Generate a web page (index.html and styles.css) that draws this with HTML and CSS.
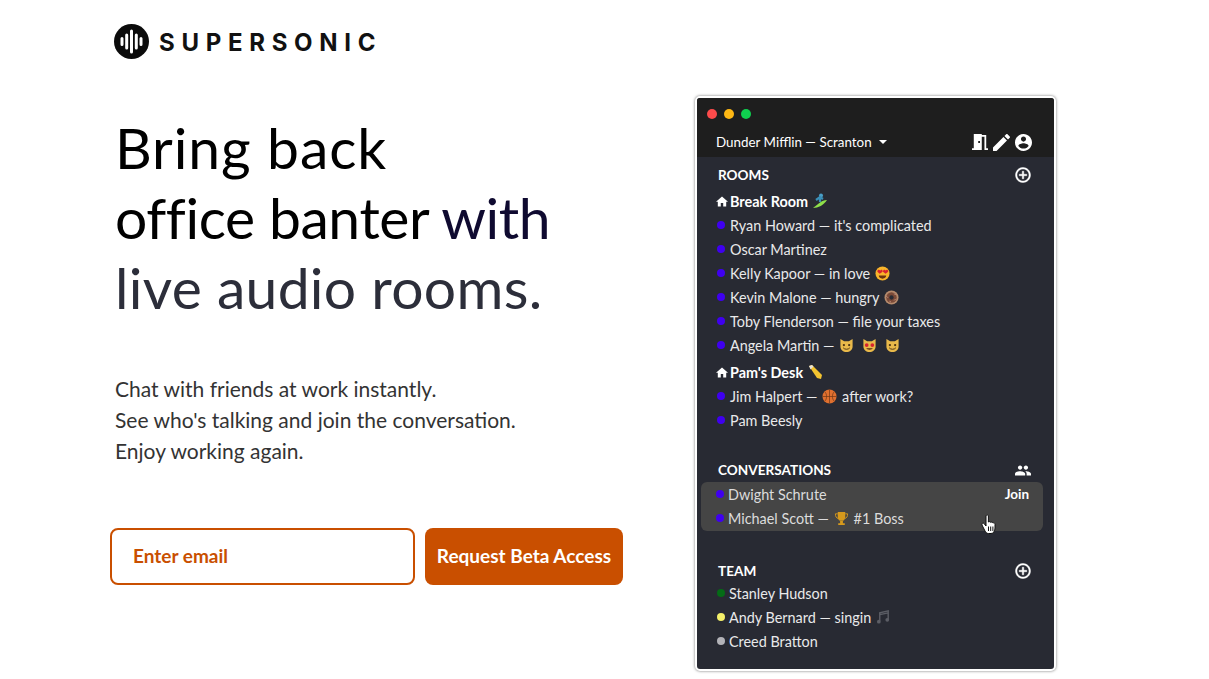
FILE: index.html
```html
<!DOCTYPE html>
<html lang="en">
<head>
  <meta charset="UTF-8" />
  <title>Supersonic</title>
  <link rel="stylesheet" href="styles.css">
</head>
<body>
  <svg class="defs" width="0" height="0">
    <defs>
      <symbol id="i-home" viewBox="2 3 20 17"><path d="M10 20v-6h4v6h5v-8h3L12 3 2 12h3v8z"/></symbol>
      <symbol id="i-add" viewBox="0 0 24 24"><path d="M13 7h-2v4H7v2h4v4h2v-4h4v-2h-4V7zm-1-5C6.48 2 2 6.48 2 12s4.48 10 10 10 10-4.48 10-10S17.52 2 12 2zm0 18c-4.41 0-8-3.59-8-8s3.59-8 8-8 8 3.59 8 8-3.59 8-8 8z"/></symbol>
      <symbol id="e-love" viewBox="0 0 16 16"><circle cx="8" cy="8" r="7.500" fill="#f9b52b"/><path d="M2.500 6c0-2.400 2.600-2.400 3-.9.4-1.500 3-1.500 2.600.9L5 8.200zM8.500 6c0-2.400 2.600-2.400 3-.9.4-1.500 2.600-1.500 2.600.9L11.300 8.200z" fill="#d9232e"/><path d="M4 10.200h8c0 2-1.800 3.300-4 3.300s-4-1.300-4-3.300z" fill="#6b3410"/></symbol>
      <symbol id="e-donut" viewBox="0 0 16 16"><circle cx="8" cy="8" r="7.500" fill="#b58a6c"/><circle cx="8" cy="8" r="5.600" fill="#7a4a38"/><circle cx="8" cy="8" r="2.300" fill="#2a2c34"/><path d="M3 7l1 1M11 4l1 1M12 10l-1 1M6 12l1 .5" stroke="#e7b9b0"/></symbol>
      <symbol id="e-cat" viewBox="0 0 16 16"><path d="M1.500 1l4 2.500h5l4-2.500v8c0 3.500-3 6-6.500 6S1.500 12.500 1.500 9z" fill="#e9b94a"/><circle cx="5.200" cy="7.500" r="1.200" fill="#4a3010"/><circle cx="10.800" cy="7.500" r="1.200" fill="#4a3010"/><path d="M4.500 10.500c1.500 2 5.500 2 7 0" stroke="#4a3010" fill="none"/></symbol>
      <symbol id="e-catlove" viewBox="0 0 16 16"><path d="M1.500 1l4 2.500h5l4-2.500v8c0 3.500-3 6-6.500 6S1.500 12.500 1.500 9z" fill="#e9b94a"/><circle cx="5" cy="7.500" r="2" fill="#d9232e"/><circle cx="11" cy="7.500" r="2" fill="#d9232e"/><path d="M4.500 11h7c-.5 2-6.500 2-7 0z" fill="#5a2a10"/></symbol>
      <symbol id="e-ball" viewBox="0 0 16 16"><circle cx="8" cy="8" r="7.500" fill="#e0702f"/><path d="M8 .5v15M.5 8h15M3 3c2.500 2.500 2.500 7.500 0 10M13 3c-2.500 2.500-2.500 7.500 0 10" stroke="#6a3416" stroke-width=".7" fill="none"/></symbol>
    </defs>
  </svg>

  <main class="page">
    <section class="hero">
      <div class="logo">
        <svg class="logo-mark" viewBox="0 0 35 35">
          <circle cx="17.500" cy="17.500" r="17.500" fill="#0b0b0b"/>
          <path d="M8 14.500v6M12.700 11v13M17.500 7v21M22.300 11v13M27 14.500v6" stroke="#fff" stroke-width="3" stroke-linecap="round"/>
        </svg>
        <span class="logo-text">SUPERSONIC</span>
      </div>

      <h1>
        <span class="line-one">Bring back</span>
        <span class="line-two">office banter <span class="navy">with</span></span>
        <span class="line-three">live audio rooms.</span>
      </h1>

      <p class="lead">Chat with friends at work instantly.<br>See who's talking and join the conversation.<br>Enjoy working again.</p>

      <form class="signup">
        <input type="text" placeholder="Enter email" />
        <button type="button">Request Beta Access</button>
      </form>
    </section>

    <section class="app">
      <div class="titlebar">
        <div class="lights">
          <span class="light red"></span>
          <span class="light yellow"></span>
          <span class="light green"></span>
        </div>
        <div class="org">
          <span class="org-name">Dunder Mifflin — Scranton</span>
          <svg class="caret" viewBox="0 0 10 5"><path d="M0 0l5 5 5-5z"/></svg>
          <div class="org-icons">
            <svg class="door" viewBox="3 3 18 18"><path d="M14 6v15H3v-2h2V3h9v1h5v15h2v2h-4V6h-3zm-4 5v2h2v-2h-2z"/></svg>
            <svg class="pencil" viewBox="3 3 18 18"><path d="M3 17.250V21h3.750L17.810 9.940l-3.750-3.750L3 17.250zM20.710 7.040c.39-.39.39-1.020 0-1.410l-2.340-2.340c-.39-.39-1.020-.39-1.410 0l-1.830 1.830 3.750 3.750 1.830-1.830z"/></svg>
            <svg class="account" viewBox="2 2 20 20"><path d="M12 2C6.480 2 2 6.480 2 12s4.480 10 10 10 10-4.480 10-10S17.520 2 12 2zm0 3c1.660 0 3 1.340 3 3s-1.340 3-3 3-3-1.340-3-3 1.340-3 3-3zm0 14.200c-2.500 0-4.710-1.280-6-3.220.03-1.990 4-3.080 6-3.080 1.990 0 5.970 1.090 6 3.080-1.290 1.940-3.500 3.220-6 3.220z"/></svg>
          </div>
        </div>
      </div>

      <div class="sidebar">
        <div class="head rooms-head">
          <span>ROOMS</span>
          <svg class="head-icon"><use href="#i-add"/></svg>
        </div>

        <div class="room">
          <svg class="home"><use href="#i-home"/></svg>Break Room
          <svg class="emoji" viewBox="0 0 16 16"><path d="M1 15c5 0 11-3 14-8-3 0-5 1-7 2.500L1 15z" fill="#8fe04a"/><circle cx="9" cy="2.500" r="2" fill="#4a9fc8"/><path d="M4 7l4-3 3 2M8 4l0 5" stroke="#3a8fb8" stroke-width="2.200" fill="none"/></svg>
        </div>
        <div class="row"><i class="dot"></i>Ryan Howard — it's complicated</div>
        <div class="row"><i class="dot"></i>Oscar Martinez</div>
        <div class="row"><i class="dot"></i>Kelly Kapoor — in love <svg class="emoji"><use href="#e-love"/></svg></div>
        <div class="row"><i class="dot"></i>Kevin Malone — hungry <svg class="emoji"><use href="#e-donut"/></svg></div>
        <div class="row"><i class="dot"></i>Toby Flenderson — file your taxes</div>
        <div class="row"><i class="dot"></i>Angela Martin — <svg class="emoji"><use href="#e-cat"/></svg><svg class="emoji spaced"><use href="#e-catlove"/></svg><svg class="emoji spaced"><use href="#e-cat"/></svg></div>

        <div class="room second">
          <svg class="home"><use href="#i-home"/></svg>Pam's Desk
          <svg class="emoji" viewBox="0 0 16 16"><path d="M2 2l3-1 10 10-1 4-4-1z" fill="#f4c430"/><path d="M2 2l3-1 1.500 1.500-3 3z" fill="#e9e3d8"/></svg>
        </div>
        <div class="row"><i class="dot"></i>Jim Halpert — <svg class="emoji"><use href="#e-ball"/></svg><span class="after">after work?</span></div>
        <div class="row"><i class="dot"></i>Pam Beesly</div>

        <div class="head convo-head">
          <span>CONVERSATIONS</span>
          <svg class="people" viewBox="1 5 22 14"><path d="M16 11c1.660 0 2.990-1.340 2.990-3S17.660 5 16 5c-1.660 0-3 1.340-3 3s1.340 3 3 3zm-8 0c1.660 0 2.990-1.340 2.990-3S9.660 5 8 5C6.340 5 5 6.340 5 8s1.340 3 3 3zm0 2c-2.330 0-7 1.170-7 3.500V19h14v-2.500c0-2.330-4.670-3.500-7-3.500zm8 0c-.29 0-.62.02-.97.05 1.160.84 1.970 1.970 1.970 3.450V19h6v-2.500c0-2.330-4.670-3.500-7-3.500z"/></svg>
        </div>
        <div class="convo">
          <div class="row"><i class="dot"></i>Dwight Schrute<span class="join">Join</span></div>
          <div class="row"><i class="dot"></i>Michael Scott — <svg class="emoji" viewBox="0 0 16 16"><path d="M4 1h8v5c0 3-1.500 4.500-4 4.500S4 9 4 6zM6.500 13h3v-3h-3zM4.500 13h7v2h-7z" fill="#d79a1c"/><path d="M4 3H1.500c0 3 1 4.500 3 5M12 3h2.500c0 3-1 4.500-3 5" stroke="#d79a1c" fill="none"/></svg><span class="after">#1 Boss</span></div>
          <svg class="hand" viewBox="0 0 16 20"><path d="M5 2c0-1.600 2.400-1.600 2.400 0v6c1-.6 1.900-.4 2.300.4.900-.6 1.900-.3 2.200.6 1-.4 2.100.1 2.100 1.300v3.700c0 3-1.500 5.500-4 5.500H7.500c-1.700 0-2.800-1-3.500-2.500L1 11c-.8-1.500 1.200-2.600 2.200-1.300L5 12z" fill="#fff" stroke="#111"/><path d="M7.500 12.500v4.500M9.700 12.500v4.500M11.900 12.500v4.500" stroke="#111"/></svg>
        </div>

        <div class="head team-head">
          <span>TEAM</span>
          <svg class="head-icon"><use href="#i-add"/></svg>
        </div>
        <div class="team">
          <div class="row"><i class="dot online"></i>Stanley Hudson</div>
          <div class="row"><i class="dot away"></i>Andy Bernard — singin <svg class="emoji" viewBox="0 0 16 16"><path d="M4 12V3l9-2v9M4 5l9-2" stroke="#5c5e66" stroke-width="1.500" fill="none"/><circle cx="3" cy="12.500" r="2" fill="#5c5e66"/><circle cx="12" cy="10.500" r="2" fill="#5c5e66"/></svg></div>
          <div class="row"><i class="dot off"></i>Creed Bratton</div>
        </div>
      </div>
    </section>
  </main>
</body>
</html>
```

FILE: styles.css
```css
* {
  box-sizing: border-box;
}
html, body {
  height: 100%;
}
body {
  margin: 0;
  background-color: #fff;
  font-family: 'Lato', 'Open Sans', sans-serif;
  overflow: hidden;
}
.defs {
  display: block;
}
.page {
  display: grid;
  grid-template-columns: 695px 361px;
  height: 679px;
}

/* left side */
.hero {
  padding: 24px 0 0 114px;
}
.logo {
  display: flex;
  align-items: center;
  gap: 10px;
  height: 35px;
}
.logo-mark {
  width: 35px;
  height: 35px;
}
.logo-text {
  padding-top: 2px;
  font-family: 'Inter', 'Liberation Sans', sans-serif;
  font-size: 24px;
  font-weight: 700;
  letter-spacing: 6.7px;
  color: #111;
}
h1 {
  margin: 53px 0 0 1px;
  font-size: 57px;
  font-weight: 400;
  line-height: 70px;
  color: #000;
}
h1 span[class^="line"] {
  display: block;
}
.line-one {
  letter-spacing: 0.9px;
}
.line-two {
  letter-spacing: -0.4px;
}
.line-three {
  letter-spacing: 0.3px;
  color: #2c2e3a;
}
.navy {
  color: #0f0a30;
}
.lead {
  margin: 51px 0 0 1px;
  font-size: 21px;
  line-height: 31px;
  color: #333;
}
.signup {
  display: flex;
  gap: 10px;
  margin: 62px 0 0 -4px;
}
.signup input {
  width: 305px;
  height: 57px;
  padding: 0 21px 3px;
  border: 2px solid #c94f00;
  border-radius: 8px;
  font-family: 'Lato', sans-serif;
  font-size: 19px;
  font-weight: 700;
  outline: none;
}
.signup input::placeholder {
  color: #c94f00;
  opacity: 1;
}
.signup button {
  width: 198px;
  height: 57px;
  padding: 0 0 3px;
  border: none;
  border-radius: 8px;
  background-color: #c94f00;
  color: #fff;
  font-family: 'Lato', sans-serif;
  font-size: 19px;
  font-weight: 700;
  cursor: pointer;
}

/* app window */
.app {
  align-self: start;
  margin-top: 96px;
  height: 575px;
  border: 2px solid #fff;
  border-radius: 5px;
  box-shadow: 0 0 3px rgba(0,0,0,0.55);
  overflow: hidden;
  color: #e9e9ea;
  background-color: #282a33;
  font-size: 14.4px;
}
.titlebar {
  height: 59px;
  background-color: #1e1e1e;
  padding: 11px 22px 0 10px;
}
.lights {
  display: flex;
  gap: 7px;
}
.light {
  width: 10px;
  height: 10px;
  border-radius: 50%;
}
.red { background-color: #fc4b4b; }
.yellow { background-color: #fdb714; }
.green { background-color: #0fd14f; }
.org {
  display: flex;
  align-items: center;
  margin: 11px 0 0 9px;
  height: 24px;
  color: #fff;
  font-size: 13.4px;
}
.caret {
  width: 8px;
  height: 4px;
  margin-left: 7px;
  fill: #fff;
}
.org-icons {
  display: flex;
  align-items: center;
  gap: 5px;
  margin-left: auto;
  fill: #fff;
}
.door { width: 16px; height: 18px; }
.pencil { width: 17px; height: 17px; }
.account { width: 17px; height: 17px; }

.sidebar {
  padding: 0 22px 0 21px;
}
.head {
  display: flex;
  align-items: center;
  justify-content: space-between;
  height: 20px;
  color: #fff;
  font-weight: 700;
  font-size: 13.6px;
}
.rooms-head { margin-top: 8px; }
.convo-head { margin-top: 28px; }
.team-head { margin-top: 30px; }
.head-icon {
  width: 18px;
  height: 18px;
  fill: #fff;
  stroke: #fff;
  stroke-width: 0.6;
}
.people {
  width: 16px;
  height: 11px;
  margin-right: 1px;
  fill: #fff;
}
.room {
  display: flex;
  align-items: center;
  height: 24px;
  margin-top: 4px;
  margin-left: -2px;
  color: #fff;
  font-weight: 700;
}
.room.second {
  margin-top: 3px;
}
.home {
  width: 12px;
  height: 11px;
  margin-right: 2px;
  fill: #fff;
}
.room .emoji {
  width: 16px;
  height: 16px;
  margin-left: 4px;
}
.row {
  display: flex;
  align-items: center;
  height: 24px;
  white-space: pre-wrap;
}
.dot {
  flex: none;
  width: 8px;
  height: 8px;
  margin: 0 5px 0 -1px;
  border-radius: 50%;
  background-color: #3f00f0;
}
.emoji {
  width: 15px;
  height: 15px;
  margin-left: 1px;
}
.spaced {
  margin-left: 8px;
}
.after {
  margin-left: 5px;
}
.convo {
  position: relative;
  height: 49px;
  margin: 3px -11px 0 -17px;
  padding: 0 15px;
  background-color: #454545;
  border-radius: 6px;
  color: #dcdcdc;
}
.convo .row:first-child {
  margin-top: -1px;
}
.convo .dot {
  margin: 0 4px 0 0;
}
.join {
  margin-left: auto;
  margin-right: -1px;
  color: #fff;
  font-weight: 700;
  font-size: 13.5px;
}
.hand {
  position: absolute;
  right: 46px;
  top: 32px;
  width: 16px;
  height: 20px;
}
.team .row {
  margin-left: -1px;
}
.team .dot {
  margin: 0 4px 0 0;
}
.dot.online { background-color: #056b16; }
.dot.away { background-color: #f4f06a; }
.dot.off { background-color: #b3b3b8; }
```
